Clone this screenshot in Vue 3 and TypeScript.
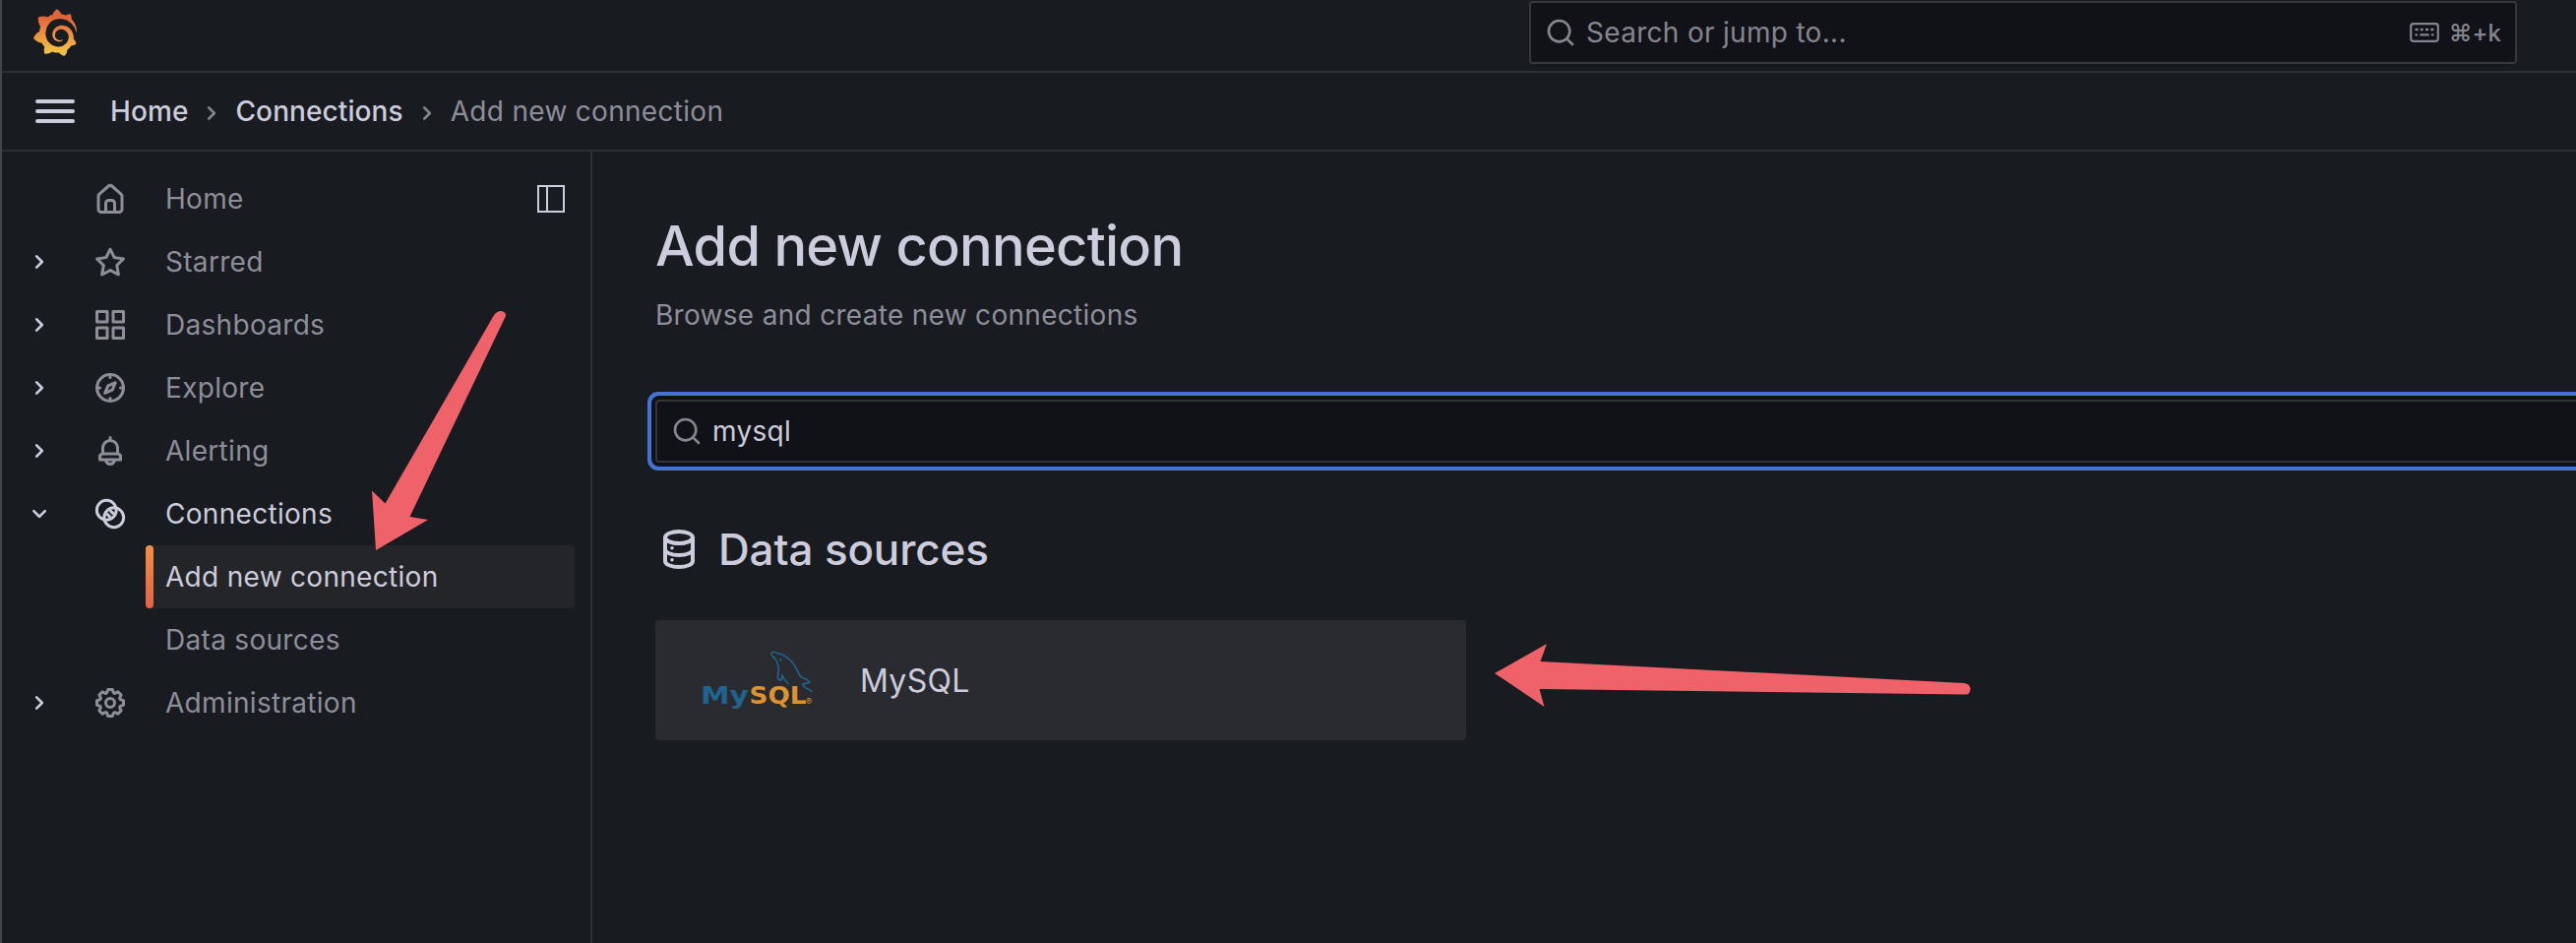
<script setup lang="ts">
interface NavItem {
  label: string
  icon?: string
  chevron?: 'right' | 'down'
  child?: boolean
  state?: 'open' | 'selected'
}

const icons: Record<string, string> = {
  home: 'M20,8h0L14,2.74a3,3,0,0,0-4,0L4,8a3,3,0,0,0-1,2.26V19a3,3,0,0,0,3,3H18a3,3,0,0,0,3-3V10.25A3,3,0,0,0,20,8ZM14,20H10V15a1,1,0,0,1,1-1h2a1,1,0,0,1,1,1Zm5-1a1,1,0,0,1-1,1H16V15a3,3,0,0,0-3-3H11a3,3,0,0,0-3,3v5H6a1,1,0,0,1-1-1V10.25a1,1,0,0,1,.34-.75l6-5.25a1,1,0,0,1,1.32,0l6,5.25a1,1,0,0,1,.34.75Z',
  star: 'M22,9.67A1,1,0,0,0,21.14,9l-5.69-.83L12.9,3a1,1,0,0,0-1.8,0L8.55,8.16,2.86,9a1,1,0,0,0-.81.68,1,1,0,0,0,.25,1l4.13,4-1,5.68A1,1,0,0,0,6.9,21.44L12,18.77l5.1,2.67a.93.93,0,0,0,.46.12,1,1,0,0,0,.59-.19,1,1,0,0,0,.4-1l-1-5.68,4.13-4A1,1,0,0,0,22,9.67Zm-6.15,4a1,1,0,0,0-.29.88l.72,4.2-3.76-2a1.06,1.06,0,0,0-.94,0l-3.76,2,.72-4.2a1,1,0,0,0-.29-.88l-3-3,4.21-.61a1,1,0,0,0,.76-.55L12,5.7l1.88,3.82a1,1,0,0,0,.76.55l4.21.61Z',
  apps: 'M10,13H3a1,1,0,0,0-1,1v7a1,1,0,0,0,1,1h7a1,1,0,0,0,1-1V14A1,1,0,0,0,10,13ZM9,20H4V15H9ZM21,2H14a1,1,0,0,0-1,1v7a1,1,0,0,0,1,1h7a1,1,0,0,0,1-1V3A1,1,0,0,0,21,2ZM20,9H15V4h5Zm1,4H14a1,1,0,0,0-1,1v7a1,1,0,0,0,1,1h7a1,1,0,0,0,1-1V14A1,1,0,0,0,21,13Zm-1,7H15V15h5ZM10,2H3A1,1,0,0,0,2,3v7a1,1,0,0,0,1,1h7a1,1,0,0,0,1-1V3A1,1,0,0,0,10,2ZM9,9H4V4H9Z',
  compass: 'M12,2A10,10,0,1,0,22,12,10,10,0,0,0,12,2Zm1,17.93V19a1,1,0,0,0-2,0v.93A8,8,0,0,1,4.07,13H5a1,1,0,0,0,0-2H4.07A8,8,0,0,1,11,4.07V5a1,1,0,0,0,2,0V4.07A8,8,0,0,1,19.93,11H19a1,1,0,0,0,0,2h.93A8,8,0,0,1,13,19.93ZM15.14,7.55l-5,2.12a1,1,0,0,0-.52.52l-2.12,5a1,1,0,0,0,.21,1.1,1,1,0,0,0,.7.29.93.93,0,0,0,.4-.08l5-2.12a1,1,0,0,0,.52-.52l2.12-5a1,1,0,0,0-1.31-1.31Zm-2.49,5.1-2.28,1,1-2.28,2.28-1Z',
  bell: 'M18,13.18V10a6,6,0,0,0-5-5.91V3a1,1,0,0,0-2,0V4.09A6,6,0,0,0,6,10v3.18A3,3,0,0,0,4,16v2a1,1,0,0,0,1,1H8.14a4,4,0,0,0,7.72,0H19a1,1,0,0,0,1-1V16A3,3,0,0,0,18,13.18ZM8,10a4,4,0,0,1,8,0v3H8Zm4,10a2,2,0,0,1-1.72-1h3.44A2,2,0,0,1,12,20Zm6-3H6V16a1,1,0,0,1,1-1H17a1,1,0,0,1,1,1Z',
  cog: 'M21.32,9.55l-1.89-.63.89-1.78A1,1,0,0,0,20.13,6L18,3.87a1,1,0,0,0-1.15-.19l-1.78.89-.63-1.89A1,1,0,0,0,13.5,2h-3a1,1,0,0,0-.95.68L8.92,4.57,7.14,3.68A1,1,0,0,0,6,3.87L3.87,6a1,1,0,0,0-.19,1.15l.89,1.78-1.89.63A1,1,0,0,0,2,10.5v3a1,1,0,0,0,.68.95l1.89.63-.89,1.78A1,1,0,0,0,3.87,18L6,20.13a1,1,0,0,0,1.15.19l1.78-.89.63,1.89a1,1,0,0,0,.95.68h3a1,1,0,0,0,.95-.68l.63-1.89,1.78.89A1,1,0,0,0,18,20.13L20.13,18a1,1,0,0,0,.19-1.15l-.89-1.78,1.89-.63A1,1,0,0,0,22,13.5v-3A1,1,0,0,0,21.32,9.55ZM20,12.78l-1.2.4A2,2,0,0,0,17.64,16l.57,1.14-1.1,1.1L16,17.64a2,2,0,0,0-2.79,1.16l-.4,1.2H11.22l-.4-1.2A2,2,0,0,0,8,17.64l-1.14.57-1.1-1.1L6.36,16A2,2,0,0,0,5.2,13.18L4,12.78V11.22l1.2-.4A2,2,0,0,0,6.36,8L5.79,6.89l1.1-1.1L8,6.36A2,2,0,0,0,10.82,5.2l.4-1.2h1.56l.4,1.2A2,2,0,0,0,16,6.36l1.14-.57,1.1,1.1L17.64,8a2,2,0,0,0,1.16,2.79l1.2.4ZM12,8a4,4,0,1,0,4,4A4,4,0,0,0,12,8Zm0,6a2,2,0,1,1,2-2A2,2,0,0,1,12,14Z',
}

const angleRight =
  'M14.83,11.29,10.59,7.05a1,1,0,0,0-1.42,0,1,1,0,0,0,0,1.41L12.71,12,9.17,15.54a1,1,0,0,0,0,1.41,1,1,0,0,0,.71.29,1,1,0,0,0,.71-.29l4.24-4.24A1,1,0,0,0,14.83,11.29Z'
const angleDown =
  'M17,9.17a1,1,0,0,0-1.41,0L12,12.71,8.46,9.17a1,1,0,0,0-1.41,0,1,1,0,0,0,0,1.42l4.24,4.24a1,1,0,0,0,1.42,0L17,10.59A1,1,0,0,0,17,9.17Z'
const searchPath =
  'M21.71,20.29,18,16.61A9,9,0,1,0,16.61,18l3.68,3.68a1,1,0,0,0,1.42,0A1,1,0,0,0,21.71,20.29ZM11,18a7,7,0,1,1,7-7A7,7,0,0,1,11,18Z'

const nav: NavItem[] = [
  { label: 'Home', icon: 'home' },
  { label: 'Starred', icon: 'star', chevron: 'right' },
  { label: 'Dashboards', icon: 'apps', chevron: 'right' },
  { label: 'Explore', icon: 'compass', chevron: 'right' },
  { label: 'Alerting', icon: 'bell', chevron: 'right' },
  { label: 'Connections', icon: 'link', chevron: 'down', state: 'open' },
  { label: 'Add new connection', child: true, state: 'selected' },
  { label: 'Data sources', child: true },
  { label: 'Administration', icon: 'cog', chevron: 'right' },
]
</script>

<template>
  <div class="app">
    <header class="topbar">
      <svg class="logo" viewBox="0 0 351 365">
        <defs>
          <linearGradient id="flame" gradientUnits="userSpaceOnUse" x1="175" y1="365" x2="175" y2="60">
            <stop offset="0" stop-color="#f6ca45" />
            <stop offset="1" stop-color="#e2633a" />
          </linearGradient>
        </defs>
        <path fill="url(#flame)" d="M342,161.2c-0.6-6.1-1.6-13.1-3.6-20.9c-2-7.7-5-16.2-9.4-25c-4.4-8.8-10.1-17.9-17.5-26.8c-2.9-3.5-6.1-6.9-9.5-10.2c5.1-20.3-6.2-37.9-6.2-37.9c-19.5-1.2-31.9,6.1-36.5,9.4c-0.8-0.3-1.5-0.7-2.3-1c-3.3-1.3-6.7-2.6-10.3-3.7c-3.5-1.1-7.1-2.1-10.8-3c-3.7-0.9-7.4-1.6-11.2-2.2c-0.7-0.1-1.3-0.2-2-0.3c-8.5-27.2-32.9-38.6-32.9-38.6c-27.3,17.3-32.4,41.5-32.4,41.5s-0.1,0.5-0.3,1.4c-1.5,0.4-3,0.9-4.5,1.3c-2.1,0.6-4.2,1.4-6.2,2.2c-2.1,0.8-4.1,1.6-6.2,2.5c-4.1,1.8-8.2,3.8-12.2,6c-3.9,2.2-7.7,4.6-11.4,7.1c-0.5-0.2-1-0.4-1-0.4c-37.8-14.4-71.3,2.9-71.3,2.9c-3.1,40.2,15.1,65.5,18.7,70.1c-0.9,2.5-1.7,5-2.5,7.5c-2.8,9.1-4.9,18.4-6.2,28.1c-0.2,1.4-0.4,2.8-0.5,4.2C18.8,192.7,8.5,228,8.5,228c29.1,33.5,63.1,35.6,63.1,35.6c0,0,0.1-0.1,0.1-0.1c4.3,7.7,9.3,15,14.9,21.9c2.4,2.9,4.8,5.6,7.4,8.3c-10.6,30.4,1.5,55.6,1.5,55.6c32.4,1.2,53.7-14.2,58.2-17.7c3.2,1.1,6.5,2.1,9.8,2.9c10,2.6,20.2,4.1,30.4,4.5c2.5,0.1,5.1,0.2,7.6,0.1l1.2,0l0.8,0l1.6,0l1.6-0.1l0,0.1c15.3,21.8,42.1,24.9,42.1,24.9c19.1-20.1,20.2-40.1,20.2-44.4l0,0c0,0,0-0.1,0-0.3c0-0.4,0-0.6,0-0.6l0,0c0-0.3,0-0.6,0-0.9c4-2.8,7.8-5.8,11.4-9.1c7.6-6.9,14.3-14.8,19.9-23.3c0.5-0.8,1-1.6,1.5-2.4c21.6,1.2,36.9-13.4,36.9-13.4c-3.6-22.5-16.4-33.5-19.1-35.6l0,0c0,0-0.1-0.1-0.3-0.2c-0.2-0.1-0.2-0.2-0.2-0.2c0,0,0,0,0,0c-0.1-0.1-0.3-0.2-0.5-0.3c0.1-1.4,0.2-2.7,0.3-4.1c0.2-2.4,0.2-4.9,0.2-7.3l0-1.8l0-0.9l0-0.5c0-0.6,0-0.4,0-0.6l-0.1-1.5l-0.1-2c0-0.7-0.1-1.3-0.2-1.9c-0.1-0.6-0.1-1.3-0.2-1.9l-0.2-1.9l-0.3-1.9c-0.4-2.5-0.8-4.9-1.4-7.4c-2.3-9.7-6.1-18.9-11-27.2c-5-8.3-11.2-15.6-18.3-21.8c-7-6.2-14.9-11.2-23.1-14.9c-8.3-3.7-16.9-6.1-25.5-7.2c-4.3-0.6-8.6-0.8-12.9-0.7l-1.6,0l-0.4,0c-0.1,0-0.6,0-0.5,0l-0.7,0l-1.6,0.1c-0.6,0-1.2,0.1-1.7,0.1c-2.2,0.2-4.4,0.5-6.5,0.9c-8.6,1.6-16.7,4.7-23.8,9c-7.1,4.3-13.3,9.6-18.3,15.6c-5,6-8.9,12.7-11.6,19.6c-2.7,6.9-4.2,14.1-4.6,21c-0.1,1.7-0.1,3.5-0.1,5.2c0,0.4,0,0.9,0,1.3l0.1,1.4c0.1,0.8,0.1,1.7,0.2,2.5c0.3,3.5,1,6.9,1.9,10.1c1.9,6.5,4.9,12.4,8.6,17.4c3.7,5,8.2,9.1,12.9,12.4c4.7,3.2,9.8,5.5,14.8,7c5,1.5,10,2.1,14.7,2.1c0.6,0,1.2,0,1.7,0c0.3,0,0.6,0,0.9,0c0.3,0,0.6,0,0.9-0.1c0.5,0,1-0.1,1.5-0.1c0.1,0,0.3,0,0.4-0.1l0.5-0.1c0.3,0,0.6-0.1,0.9-0.1c0.6-0.1,1.1-0.2,1.7-0.3c0.6-0.1,1.1-0.2,1.6-0.4c1.1-0.2,2.1-0.6,3.1-0.9c2-0.7,4-1.5,5.7-2.4c1.8-0.9,3.4-2,5-3c0.4-0.3,0.9-0.6,1.3-1c1.6-1.3,1.9-3.7,0.6-5.3c-1.1-1.4-3.1-1.8-4.7-0.9c-0.4,0.2-0.8,0.4-1.2,0.6c-1.4,0.7-2.8,1.3-4.3,1.8c-1.5,0.5-3.1,0.9-4.7,1.2c-0.8,0.1-1.6,0.2-2.5,0.3c-0.4,0-0.8,0.1-1.3,0.1c-0.4,0-0.9,0-1.2,0c-0.4,0-0.8,0-1.2,0c-0.5,0-1,0-1.5-0.1c0,0-0.3,0-0.1,0l-0.2,0l-0.3,0c-0.2,0-0.5,0-0.7-0.1c-0.5-0.1-0.9-0.1-1.4-0.2c-3.7-0.5-7.4-1.6-10.9-3.2c-3.6-1.6-7-3.8-10.1-6.6c-3.1-2.8-5.8-6.1-7.9-9.9c-2.1-3.8-3.6-8-4.3-12.4c-0.3-2.2-0.5-4.5-0.4-6.7c0-0.6,0.1-1.2,0.1-1.8c0,0.2,0-0.1,0-0.1l0-0.2l0-0.5c0-0.3,0.1-0.6,0.1-0.9c0.1-1.2,0.3-2.4,0.5-3.6c1.7-9.6,6.5-19,13.9-26.1c1.9-1.8,3.9-3.4,6-4.9c2.1-1.5,4.4-2.8,6.8-3.9c2.4-1.1,4.8-2,7.4-2.7c2.5-0.7,5.1-1.1,7.8-1.4c1.3-0.1,2.6-0.2,4-0.2c0.4,0,0.6,0,0.9,0l1.1,0l0.7,0c0.3,0,0,0,0.1,0l0.3,0l1.1,0.1c2.9,0.2,5.7,0.6,8.5,1.3c5.6,1.2,11.1,3.3,16.2,6.1c10.2,5.7,18.9,14.5,24.2,25.1c2.7,5.3,4.6,11,5.5,16.9c0.2,1.5,0.4,3,0.5,4.5l0.1,1.1l0.1,1.1c0,0.4,0,0.8,0,1.1c0,0.4,0,0.8,0,1.1l0,1l0,1.1c0,0.7-0.1,1.9-0.1,2.6c-0.1,1.6-0.3,3.3-0.5,4.9c-0.2,1.6-0.5,3.2-0.8,4.8c-0.3,1.6-0.7,3.2-1.1,4.7c-0.8,3.1-1.8,6.2-3,9.3c-2.4,6-5.6,11.8-9.4,17.1c-7.7,10.6-18.2,19.2-30.2,24.7c-6,2.7-12.3,4.7-18.8,5.7c-3.2,0.6-6.5,0.9-9.8,1l-0.6,0l-0.5,0l-1.1,0l-1.6,0l-0.8,0c0.4,0-0.1,0-0.1,0l-0.3,0c-1.8,0-3.5-0.1-5.3-0.3c-7-0.5-13.9-1.8-20.7-3.7c-6.7-1.9-13.2-4.6-19.4-7.8c-12.3-6.6-23.4-15.6-32-26.5c-4.3-5.4-8.1-11.3-11.2-17.4c-3.1-6.1-5.6-12.6-7.4-19.1c-1.8-6.6-2.9-13.3-3.4-20.1l-0.1-1.3l0-0.3l0-0.3l0-0.6l0-1.1l0-0.3l0-0.4l0-0.8l0-1.6l0-0.3c0,0,0,0.1,0-0.1l0-0.6c0-0.8,0-1.7,0-2.5c0.1-3.3,0.4-6.8,0.8-10.2c0.4-3.4,1-6.9,1.7-10.3c0.7-3.4,1.5-6.8,2.5-10.2c1.9-6.7,4.3-13.2,7.1-19.3c5.7-12.2,13.1-23.1,22-31.8c2.2-2.2,4.5-4.2,6.9-6.2c2.4-1.9,4.9-3.7,7.5-5.4c2.5-1.7,5.2-3.2,7.9-4.6c1.3-0.7,2.7-1.4,4.1-2c0.7-0.3,1.4-0.6,2.1-0.9c0.7-0.3,1.4-0.6,2.1-0.9c2.8-1.2,5.7-2.2,8.7-3.1c0.7-0.2,1.5-0.4,2.2-0.7c0.7-0.2,1.5-0.4,2.2-0.6c1.5-0.4,3-0.8,4.5-1.1c0.7-0.2,1.5-0.3,2.3-0.5c0.8-0.2,1.5-0.3,2.3-0.5c0.8-0.1,1.5-0.3,2.3-0.4l1.1-0.2l1.2-0.2c0.8-0.1,1.5-0.2,2.3-0.3c0.9-0.1,1.7-0.2,2.6-0.3c0.7-0.1,1.9-0.2,2.6-0.3c0.5-0.1,1.1-0.1,1.6-0.2l1.1-0.1l0.5-0.1l0.6,0c0.9-0.1,1.7-0.1,2.6-0.2l1.3-0.1c0,0,0.5,0,0.1,0l0.3,0l0.6,0c0.7,0,1.5-0.1,2.2-0.1c2.9-0.1,5.9-0.1,8.8,0c5.8,0.2,11.5,0.9,17,1.9c11.1,2.1,21.5,5.6,31,10.3c9.5,4.6,17.9,10.3,25.3,16.5c0.5,0.4,0.9,0.8,1.4,1.2c0.4,0.4,0.9,0.8,1.3,1.2c0.9,0.8,1.7,1.6,2.6,2.4c0.9,0.8,1.7,1.6,2.5,2.4c0.8,0.8,1.6,1.6,2.4,2.5c3.1,3.3,6,6.6,8.6,10c5.2,6.7,9.4,13.5,12.7,19.9c0.2,0.4,0.4,0.8,0.6,1.2c0.2,0.4,0.4,0.8,0.6,1.2c0.4,0.8,0.8,1.6,1.1,2.4c0.4,0.8,0.7,1.5,1.1,2.3c0.3,0.8,0.7,1.5,1,2.3c1.2,3,2.4,5.9,3.3,8.6c1.5,4.4,2.6,8.3,3.5,11.7c0.3,1.4,1.6,2.3,3,2.1c1.5-0.1,2.6-1.3,2.6-2.8C342.6,170.4,342.5,166.1,342,161.2z" />
      </svg>
      <div class="search">
        <svg class="i32" viewBox="0 0 24 24"><path :d="searchPath" /></svg>
        <span class="placeholder">Search or jump to...</span>
        <svg class="keyboard" viewBox="0 0 30 20">
          <rect x="1.2" y="1.2" width="27.6" height="17.6" rx="2.6" fill="none" stroke="currentColor" stroke-width="2.2" />
          <path d="M5.5 7h3M10.7 7h3M16 7h3M21.3 7h3M5.5 12.4h2.4M10.3 12.4h9.4M22 12.4h2.4" fill="none" stroke="currentColor" stroke-width="2.4" />
        </svg>
        <span class="shortcut">⌘+k</span>
      </div>
    </header>

    <div class="crumbbar">
      <div class="burger"><i /><i /><i /></div>
      <nav class="crumbs">
        <span>Home</span>
        <svg class="i32" viewBox="0 0 24 24"><path :d="angleRight" /></svg>
        <span>Connections</span>
        <svg class="i32" viewBox="0 0 24 24"><path :d="angleRight" /></svg>
        <span class="current">Add new connection</span>
      </nav>
    </div>

    <div class="body">
      <aside class="sidebar">
        <div v-for="item in nav" :key="item.label" class="row" :class="[item.state, { child: item.child }]">
          <template v-if="!item.child">
            <span class="chevron">
              <svg v-if="item.chevron" class="i32" viewBox="0 0 24 24">
                <path :d="item.chevron === 'down' ? angleDown : angleRight" />
              </svg>
            </span>
            <svg v-if="item.icon === 'link'" class="i36" viewBox="0 0 24 24">
              <g class="stroke">
                <circle cx="9.5" cy="9.5" r="6.6" />
                <circle cx="14.5" cy="14.5" r="6.6" />
                <path d="M9.6 11.8l2.6 2.6M11.8 9.6l2.6 2.6" />
              </g>
            </svg>
            <svg v-else class="i36" viewBox="0 0 24 24"><path :d="icons[item.icon ?? 'home']" /></svg>
          </template>
          <span class="label">{{ item.label }}</span>
          <svg v-if="item.icon === 'home'" class="dock" viewBox="0 0 28 28">
            <path d="M1 1h26v26H1zM10 1v26" />
          </svg>
        </div>
      </aside>

      <main class="main">
        <h1>Add new connection</h1>
        <p class="subtitle">Browse and create new connections</p>
        <div class="filter">
          <svg class="i32" viewBox="0 0 24 24"><path :d="searchPath" /></svg>
          <span>mysql</span>
        </div>
        <h2>
          <svg class="i48" viewBox="0 0 24 24">
            <g class="stroke">
              <ellipse cx="12" cy="6" rx="7" ry="3" />
              <path d="M5 6v12c0 1.7 3.1 3 7 3s7-1.3 7-3V6M5 6c0 1.7 3.1 3 7 3s7-1.3 7-3M5 12c0 1.7 3.1 3 7 3s7-1.3 7-3" />
            </g>
            <circle cx="8.5" cy="11.4" r="0.9" />
            <circle cx="8.5" cy="17.4" r="0.9" />
          </svg>
          <span>Data sources</span>
        </h2>
        <div class="card">
          <svg class="mysql" viewBox="0 0 116 62">
            <g fill="none" stroke="#20638f" stroke-width="1.6" stroke-linejoin="round" stroke-linecap="round">
              <path d="M88 34.500 C86 32 85 31 83.700 29.500 L82 26 C81 28 82 30 80.700 31.300 C79 31 78 30.500 77.600 29 C76.500 26 79 23 78.300 19 C78 16 77 14 76.500 12 C75.500 9 73.500 8 71.500 6 C70 4 71.500 2.300 73 2.300 C75 2.300 76 3 77 3.800 C80 4 83 5 85.300 6.900 C89 9.500 92 12 93.700 15 C96 18.500 97.500 21 98.700 24 C99.500 27 101 28 103.500 28.800 C106 30 108.500 31 110 32.700 C109 34.800 106 34 102.700 35 C103.500 37 105 38.500 106.500 39.300 C109 40 110.500 41 111.700 42.500" />
              <path d="M80 9.800l0.900 1.200" />
            </g>
            <text class="word blue" x="-1" y="55" textLength="49" lengthAdjust="spacingAndGlyphs">My</text>
            <text class="word orange" x="48.500" y="55" textLength="58" lengthAdjust="spacingAndGlyphs">SQL</text>
            <text class="reg" x="106" y="56">®</text>
          </svg>
          <span>MySQL</span>
        </div>
      </main>
    </div>

    <svg class="arrows" viewBox="0 0 2618 958">
      <path d="M382 559 L378 498.500 L391.500 511.500 L501.500 321 Q505 315.500 510 316 Q515.500 318 513.500 322 L416.500 525 L435 528 Z" />
      <path d="M1519 684 L1572 654 L1565.500 672 L1996 694 Q2002.500 695 2002.500 700 Q2002 705.500 1998 705.500 L1564.500 700 L1569.500 718 Z" />
    </svg>
  </div>
</template>

<style>
html,
body {
  margin: 0;
  background: #181b1f;
  overflow: hidden;
}
</style>

<style scoped>
.app {
  position: relative;
  display: flex;
  flex-direction: column;
  box-sizing: border-box;
  width: 2618px;
  height: 958px;
  overflow: hidden;
  border-left: 2px solid #434548;
  background: #181b1f;
  color: #ccccdc;
  font-family: Inter, "Liberation Sans", sans-serif;
  font-size: 28px;
  letter-spacing: 0.3px;
  white-space: nowrap;
}
svg {
  flex: none;
  fill: currentColor;
}
.i32 {
  width: 32px;
  height: 32px;
}
.i36 {
  width: 36px;
  height: 36px;
}
.i48 {
  width: 48px;
  height: 48px;
}
.stroke {
  fill: none;
  stroke: currentColor;
  stroke-width: 2;
}
.topbar {
  display: flex;
  justify-content: space-between;
  align-items: flex-start;
  box-sizing: border-box;
  height: 74px;
  padding: 1px 60px 0 31px;
  border-bottom: 2px solid #2d3035;
}
.logo {
  width: 46px;
  height: 48px;
  margin-top: 8px;
}
.search {
  display: flex;
  align-items: center;
  box-sizing: border-box;
  width: 1004px;
  height: 64px;
  padding: 0 14px;
  border: 2px solid #36373d;
  border-radius: 4px;
  background: #111217;
  color: #85858f;
}
.placeholder {
  flex: 1;
  margin-left: 10px;
}
.keyboard {
  width: 30px;
  height: 20px;
  margin-right: 10px;
}
.shortcut {
  font-size: 24px;
  font-weight: 500;
  letter-spacing: 0;
}
.crumbbar {
  display: flex;
  align-items: center;
  box-sizing: border-box;
  height: 80px;
  padding-left: 34px;
  border-bottom: 2px solid #2d3035;
}
.burger {
  display: flex;
  flex-direction: column;
  gap: 6px;
  width: 40px;
  margin-right: 36px;
}
.burger i {
  height: 4px;
  border-radius: 2px;
  background: #ccccdc;
}
.crumbs {
  display: flex;
  align-items: center;
  font-weight: 500;
  letter-spacing: 0.1px;
}
.crumbs svg {
  margin: 3px 8px 0;
  color: #85858f;
}
.current {
  color: #8e8e9a;
  font-weight: 400;
  letter-spacing: 0.3px;
}
.body {
  display: flex;
  flex: 1;
}
.sidebar {
  flex: none;
  box-sizing: border-box;
  width: 600px;
  padding: 16px 16px 0 0;
  border-right: 2px solid #2d3035;
}
.row {
  display: flex;
  align-items: center;
  height: 64px;
  color: #8e8e9a;
}
.chevron {
  display: flex;
  width: 32px;
  margin: 0 36px 0 22px;
  padding-right: 2px;
  color: #ccccdc;
}
.label {
  flex: 1;
  margin-left: 38px;
}
.row.open,
.row.selected {
  color: #ccccdc;
}
.row.child {
  margin-left: 146px;
}
.row.child .label {
  margin-left: 20px;
}
.row.selected {
  border-radius: 4px;
  background: #242529;
}
.row.selected::before {
  width: 8px;
  height: 64px;
  margin-right: -8px;
  border-radius: 4px;
  background: linear-gradient(#f28f44, #e2624a);
  content: "";
}
.dock {
  width: 28px;
  height: 28px;
  margin-right: 10px;
  fill: none;
  stroke: #ccccdc;
  stroke-width: 2;
}
.main {
  flex: none;
  padding: 62px 0 0 64px;
}
h1 {
  margin: 0;
  font-size: 56px;
  font-weight: 500;
  line-height: 68px;
  letter-spacing: -0.75px;
}
.subtitle {
  margin: 14px 0 0;
  color: #8e8e9a;
  line-height: 44px;
}
.filter {
  display: flex;
  align-items: center;
  gap: 10px;
  box-sizing: border-box;
  height: 64px;
  width: 2000px;
  margin-top: 64px;
  padding-left: 14px;
  border: 2px solid #333439;
  border-radius: 4px;
  background: #111217;
  box-shadow: 0 0 0 4px #111217, 0 0 0 8px #4473d3;
}
.filter svg {
  color: #85858f;
}
h2 {
  display: flex;
  align-items: center;
  gap: 16px;
  height: 52px;
  margin: 62px 0 46px;
  font-size: 44px;
  font-weight: 500;
  letter-spacing: -0.15px;
}
.card {
  display: flex;
  align-items: center;
  box-sizing: border-box;
  width: 824px;
  height: 122px;
  padding-left: 47px;
  border-radius: 4px;
  background: #2a2b30;
  font-size: 32px;
}
.mysql {
  width: 116px;
  height: 62px;
  margin-right: 45px;
  overflow: visible;
}
.word {
  font-family: "DejaVu Sans", sans-serif;
  font-size: 24px;
  font-weight: 700;
  letter-spacing: 0;
}
.blue {
  fill: #20638f;
}
.orange {
  fill: #dc9230;
}
.reg {
  fill: #dc9230;
  font-size: 9px;
  letter-spacing: 0;
}
.arrows {
  position: absolute;
  top: 0;
  left: -2px;
  width: 2618px;
  height: 958px;
  fill: #ef626a;
  pointer-events: none;
}
</style>
